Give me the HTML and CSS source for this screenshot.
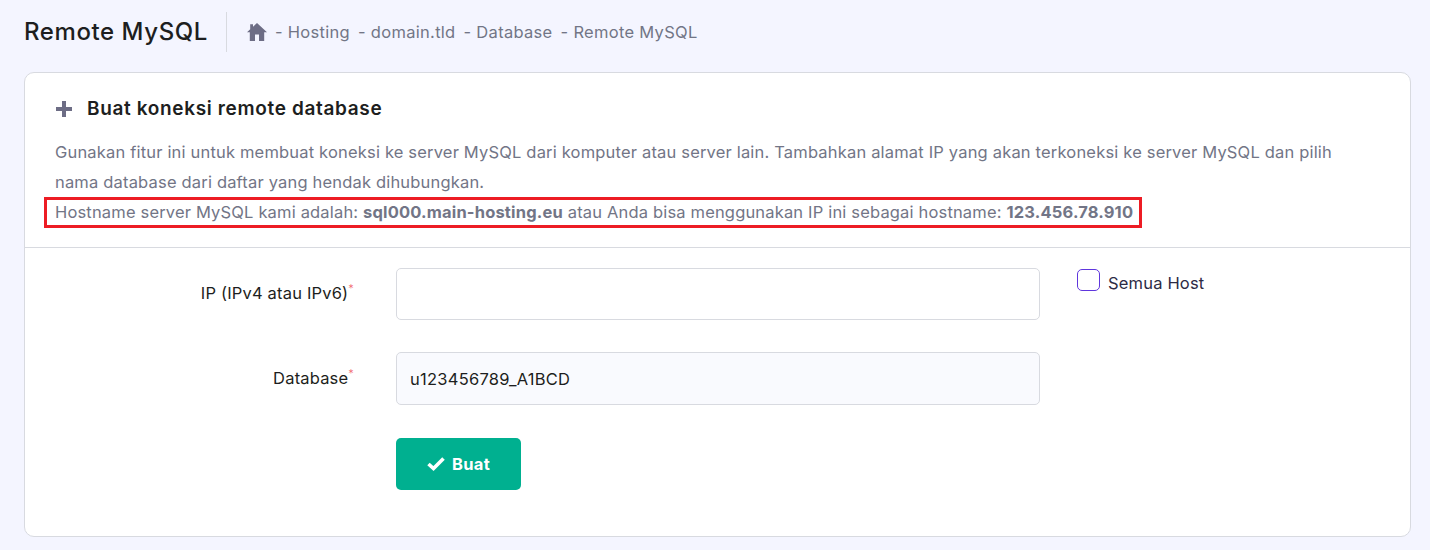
FILE: index.html
```html
<!DOCTYPE html>
<html lang="id">
<head>
    <meta charset="UTF-8">
    <meta name="viewport" content="width=device-width, initial-scale=1.0">
    <title>Remote MySQL</title>
    <link rel="stylesheet" href="styles.css">
</head>
<body>
  <header class="page-header">
    <h1>Remote MySQL</h1>
    <nav class="breadcrumbs">
      <svg class="home-icon" viewBox="0 0 20 18" width="20" height="18"><path d="M10 0 L20 9.2 H17.2 V18 H12 V11.5 H8 V18 H2.8 V9.2 H0 L3.2 6.3 V1.2 H6 V3.7 Z" fill="#6d6d85"/></svg>
      <span>- Hosting</span>
      <span>- domain.tld</span>
      <span>- Database</span>
      <span>- Remote MySQL</span>
    </nav>
  </header>

  <main class="card">
    <section class="card-top">
      <h2>
        <svg class="plus-icon" viewBox="0 0 18 18" width="18" height="18"><path d="M7 1 H11 V7 H17 V11 H11 V17 H7 V11 H1 V7 H7 Z" fill="#6d6d85"/></svg>
        Buat koneksi remote database
      </h2>
      <p>Gunakan fitur ini untuk membuat koneksi ke server MySQL dari komputer atau server lain. Tambahkan alamat IP yang akan terkoneksi ke server MySQL dan pilih nama database dari daftar yang hendak dihubungkan.</p>
      <p class="hostname">Hostname server MySQL kami adalah: <b>sql000.main-hosting.eu</b> atau Anda bisa menggunakan IP ini sebagai hostname: <b>123.456.78.910</b></p>
    </section>

    <form class="card-form">
      <div class="form-row">
        <label for="ip">IP (IPv4 atau IPv6)<sup>*</sup></label>
        <input type="text" id="ip">
        <div class="all-hosts">
          <span class="checkbox"></span>
          <span>Semua Host</span>
        </div>
      </div>
      <div class="form-row">
        <label for="database">Database<sup>*</sup></label>
        <input type="text" id="database" class="filled" value="u123456789_A1BCD">
      </div>
      <div class="form-row">
        <button type="button">
          <svg viewBox="0 0 18 14" width="18" height="14"><path d="M1.5 7 L6.5 11.5 L16.5 1.5" fill="none" stroke="#fff" stroke-width="3.6"/></svg>
          Buat
        </button>
      </div>
    </form>
  </main>
</body>
</html>
```

FILE: styles.css
```css
body {
    margin: 0;
    height: 550px;
    overflow: hidden;
    background-color: #f4f5ff;
    font-family: Inter, Arial, sans-serif;
    font-size: 16.5px;
    letter-spacing: 0.18px;
    color: #1d1e20;
}

.page-header {
    display: flex;
    align-items: center;
    height: 40px;
    padding: 12px 0 20px 24px;
}

h1 {
    margin: 0;
    padding-right: 18px;
    font-size: 24px;
    font-weight: 500;
    letter-spacing: 0.58px;
    color: #1d1e20;
    border-right: 1px solid #d8dae0;
    line-height: 40px;
}

.breadcrumbs {
    display: flex;
    align-items: center;
    gap: 8px;
    margin-left: 20px;
    color: #727586;
    letter-spacing: 0.3px;
}

.card {
    box-sizing: border-box;
    width: 1387px;
    height: 465px;
    margin-left: 24px;
    background-color: #fff;
    border: 1px solid #d8dae0;
    border-radius: 10px;
}

.card-top {
    box-sizing: border-box;
    height: 175px;
    padding: 22px 30px 0;
    border-bottom: 1px solid #d8dae0;
}

h2 {
    display: flex;
    align-items: center;
    gap: 14px;
    margin: 0 0 14px;
    font-size: 19px;
    font-weight: 600;
    letter-spacing: 0.65px;
    line-height: 28px;
    color: #1d1e20;
}

p {
    margin: 0;
    color: #727586;
    line-height: 30px;
}

.hostname {
    width: fit-content;
    margin-left: -8px;
    margin-top: 3px;
    padding: 0 6px 0 8px;
    line-height: 25px;
    letter-spacing: 0.17px;
    outline: 3px solid #ed1c24;
    white-space: nowrap;
}

.card-form {
    padding-top: 20px;
}

.form-row {
    display: flex;
    align-items: flex-start;
    margin-bottom: 32px;
    padding-left: 371px;
    position: relative;
}

label {
    position: absolute;
    left: 0;
    width: 329px;
    line-height: 50px;
    text-align: right;
    color: #1d1e20;
}

label[for="database"] {
    line-height: 52px;
}

sup {
    color: #f0616a;
    font-size: 11px;
    font-weight: 300;
    line-height: 0;
}

input {
    box-sizing: border-box;
    width: 644px;
    height: 52px;
    padding: 0 13px;
    border: 1px solid #d8dae0;
    border-radius: 5px;
    font-family: inherit;
    font-size: 16.5px;
    letter-spacing: 0.25px;
    color: #1d1e20;
    background-color: #fff;
}

input.filled {
    height: 53px;
    background-color: #f9fafe;
}

.all-hosts {
    display: flex;
    align-items: flex-start;
    gap: 8px;
    margin-left: 37px;
    margin-top: 1px;
    line-height: 28px;
    color: #2d2b45;
}

.checkbox {
    box-sizing: border-box;
    width: 23px;
    height: 22px;
    border: 1.5px solid #5f36dd;
    border-radius: 5px;
}

button {
    display: flex;
    align-items: center;
    justify-content: center;
    gap: 7px;
    width: 125px;
    height: 52px;
    margin-top: 1px;
    border: none;
    border-radius: 5px;
    background-color: #00b090;
    color: #fff;
    font-family: inherit;
    font-size: 16.5px;
    font-weight: 700;
    letter-spacing: 0.3px;
}
```
